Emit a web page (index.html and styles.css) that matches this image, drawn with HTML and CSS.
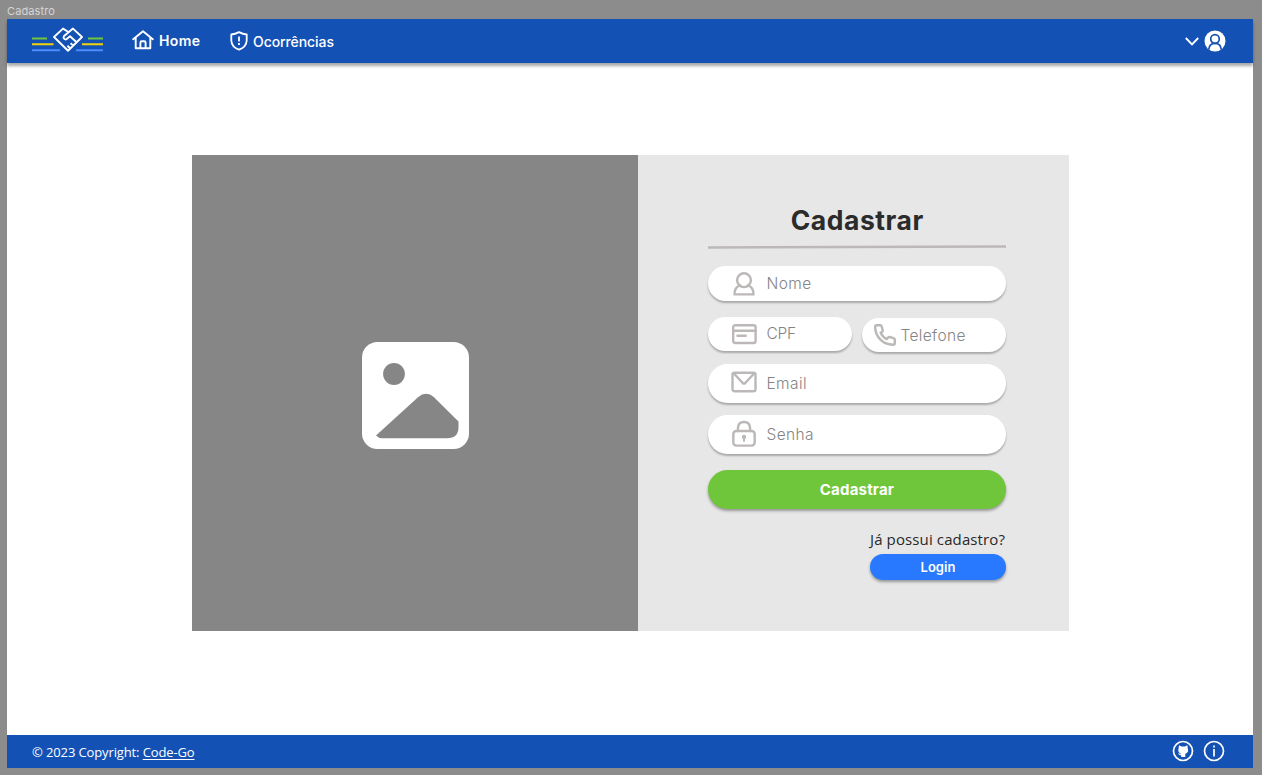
FILE: index.html
```html
<!DOCTYPE html>
<html lang="pt-BR">
<head>
<meta charset="utf-8">
<title>Cadastro</title>
<link rel="stylesheet" href="styles.css">
</head>
<body>
<div class="frame-label">Cadastro</div>
<div class="frame">
  <header class="header">
    <svg class="logo" width="72" height="26" viewBox="0 0 72 26" fill="none">
      <path d="M0 11.5h15M56 11.5h15" stroke="#71c63b" stroke-width="2"/>
      <path d="M0 17.3h21.5M50 17.3h21" stroke="#f2d20c" stroke-width="2"/>
      <path d="M0 23.3h28M44 23.3h27" stroke="#4b8dff" stroke-width="2"/>
      <path d="M36 4.8L31 1.6L22 10L36 23.7L50 10L41 1.6L31.8 9.3C30.8 11.3 33 13.4 35 11.8L38 9.2L44.6 15.2M38.6 16.2l2.4 2.2M35.4 18.8l2.2 2" stroke="#fff" stroke-width="1.9" stroke-linejoin="round"/>
    </svg>
    <a class="nav nav-home">
      <svg width="22" height="20" viewBox="0 0 22 20" fill="none" stroke="#fff" stroke-width="1.9" stroke-linejoin="round" stroke-linecap="round"><path d="M1.2 9.2L11 1.2L20.8 9.2M3.7 7.5V18.2H18.3V7.5M8.4 18v-5.2q0-1.5 1.4-1.5h2.4q1.4 0 1.4 1.5V18"/></svg>
      <span class="t-home">Home</span>
    </a>
    <a class="nav nav-oc">
      <svg width="18" height="20" viewBox="0 0 18 20" fill="none" stroke="#fff" stroke-width="1.8" stroke-linejoin="round"><path d="M9 1.1Q12.8 3.2 16.7 3.5V9.5Q16.4 16 9 18.7Q1.6 16 1.3 9.5V3.5Q5.2 3.2 9 1.1Z"/><path d="M9 5.5v5M9 12v1.9"/></svg>
      <span class="t-oc">Ocorrências</span>
    </a>
    <div class="user">
      <svg width="14" height="9" viewBox="0 0 14 9" fill="none" stroke="#fff" stroke-width="1.9"><path d="M.8 1L7 7.3L13.2 1"/></svg>
      <svg width="22" height="22" viewBox="0 0 22 22"><circle cx="11" cy="11" r="10.5" fill="#fff"/><g fill="none" stroke="#1351b4" stroke-width="1.7"><circle cx="11" cy="9" r="4.3"/><path d="M4.8 19.4Q5.3 13.4 11 13.4Q16.7 13.4 17.2 19.4"/></g></svg>
    </div>
  </header>
  <main class="main">
    <section class="card">
      <div class="picture">
        <svg width="107" height="107" viewBox="0 0 107 107"><rect width="107" height="107" rx="15.5" fill="#fff"/><circle cx="32" cy="32" r="10.9" fill="#868686"/><path d="M14 93.5L56 55.2Q64 48.5 72 55.2L96.5 79.5V85Q96.5 96.3 85 96.3H20.5Q16.5 96.3 14 93.5Z" fill="#868686"/></svg>
      </div>
      <form class="form">
        <h1 class="title"><span>Cadastrar</span></h1>
        <svg class="rule" width="298" height="4" viewBox="0 0 298 4"><path d="M0 2.5L298 1.5" stroke="#bcb8b8" stroke-width="2.4"/></svg>
        <label class="field f-nome">
          <svg width="26" height="26" viewBox="0 0 26 26"><circle cx="13" cy="9.2" r="6.9"/><path d="M9 14.3C5.2 15.5 3.5 19 3.5 23.4H22.5C22.5 19 20.8 15.5 17 14.3"/></svg>
          <span>Nome</span>
        </label>
        <div class="pair">
          <label class="field f-cpf">
            <svg width="26" height="26" viewBox="0 0 26 26"><rect x="2.2" y="4.2" width="22.4" height="17.8" rx="2"/><path d="M2.2 9.8h22.4M6.5 14.8h8.2"/></svg>
            <span>CPF</span>
          </label>
          <label class="field f-tel">
            <svg width="22" height="22" viewBox="0 0 22 22"><path d="M2.5 1.3H6.2Q7.4 1.3 7.7 2.5L8.7 6.4Q8.9 7.3 8.2 7.8L6.7 8.8Q8.4 13 12.8 15.1L14.2 13.4Q14.8 12.8 15.6 13L19.6 14.1Q20.8 14.5 20.8 15.7V19.2Q20.8 20.7 19.2 20.7Q11.2 20.4 6.2 15.3Q1.2 10.2 1.1 2.8Q1.1 1.3 2.5 1.3Z"/></svg>
            <span>Telefone</span>
          </label>
        </div>
        <label class="field f-email">
          <svg width="26" height="26" viewBox="0 0 26 26"><rect x="1.5" y="3.7" width="23" height="18.6" rx="2"/><path d="M3 4.5L11.7 14Q13 15.2 14.3 14L23 4.5"/></svg>
          <span>Email</span>
        </label>
        <label class="field f-senha">
          <svg width="26" height="28" viewBox="0 0 26 28"><rect x="2.3" y="11" width="21.4" height="14.6" rx="3"/><path d="M6.9 11V8.2Q7.2 2 13 2Q18.8 2 19.1 8.2V11"/><circle cx="13" cy="17" r="2.2" class="solid"/><path class="slot" d="M13 17v4"/></svg>
          <span>Senha</span>
        </label>
        <button class="submit" type="button"><span>Cadastrar</span></button>
        <div class="login">
          <p class="question">Já possui cadastro?</p>
          <button class="login-btn" type="button"><span>Login</span></button>
        </div>
      </form>
    </section>
  </main>
  <footer class="footer">
    <p class="copy"><span class="c1">© 2023 Copyright:</span> <a class="c2">Code-Go</a></p>
    <div class="links">
      <svg width="22" height="22" viewBox="0 0 22 22"><circle cx="11" cy="11" r="9.5" fill="none" stroke="#fff" stroke-width="1.7"/><path d="M7.2 5.3L9.4 6.6H13L15.2 5.3Q15.9 7 15.7 8.2C16.9 11.3 15.4 13.2 13.3 13.7V17H9.2V15.2Q7 15.6 5.9 13.2L7.2 13.4L9.2 14.3V13.7C7 13.2 5.6 11.3 6.7 8.2Q6.5 7 7.2 5.3Z" fill="#fff"/></svg>
      <svg width="22" height="22" viewBox="0 0 22 22" fill="none" stroke="#fff" stroke-width="1.7"><circle cx="11" cy="11" r="9.5"/><path d="M11 9v7.4M11 5.6v2"/></svg>
    </div>
  </footer>
</div>
</body>
</html>
```
FILE: styles.css
```css
* { box-sizing: border-box; }
body { margin: 0; width: 1262px; height: 775px; overflow: hidden; background: #8c8c8c; font-family: Inter, sans-serif; }
svg { display: block; flex: none; }
p, h1 { margin: 0; }
.frame-label { height: 19px; padding: 4px 0 0 7px; font-size: 11px; line-height: 14px; color: #d6d6d6; letter-spacing: .1px; }
.frame { width: 1246px; height: 749px; margin-left: 7px; display: flex; flex-direction: column; background: #fff; }
.header { height: 44px; background: #1351b4; box-shadow: 0 3px 3px rgba(0,0,0,.35); display: flex; align-items: flex-start; padding-left: 25px; color: #fff; flex: none; }
.logo { margin-top: 8px; }
.nav { display: flex; align-items: flex-start; font-size: 14px; line-height: 20px; white-space: nowrap; }
.nav-home { margin: 11px 0 0 28px; width: 97.5px; gap: 5px; }
.nav-home span { margin-top: 1px; font-weight: 600; }
.nav-oc { margin-top: 11.5px; gap: 5.5px; }
.nav-oc span { margin-top: 1px; font-weight: 500; }
.t-home { letter-spacing: .4px; }
.t-oc { letter-spacing: -.08px; }
.user { margin: 11px 27.5px 0 auto; display: flex; gap: 5px; align-items: center; }
.main { flex: 1; padding: 92px 0 0 185px; }
.card { width: 876.5px; height: 476px; display: flex; background: #e7e7e7; }
.picture { width: 446.4px; background: #868686; padding: 187px 0 0 169.6px; flex: none; }
.form { width: 298px; margin-left: 69.6px; padding-top: 44px; }
.title { height: 46px; text-align: center; font-size: 26.5px; line-height: 42px; font-weight: 650; color: #2b2b2b; white-space: nowrap; }
.title span { letter-spacing: .55px; margin-right: -.55px; }
.rule { margin-top: 0; }
.field { display: flex; align-items: center; background: #fff; border-radius: 20px; box-shadow: 0 2px 2px rgba(0,0,0,.27); padding-left: 23px; gap: 9.5px; font-size: 15.5px; font-weight: 300; color: #858585; white-space: nowrap; letter-spacing: .4px; }
.field svg { fill: none; stroke: #bdb8b8; stroke-width: 2.4; stroke-linecap: round; stroke-linejoin: round; }
.field .solid { fill: #bdb8b8; stroke: none; }
.field .slot { stroke-width: 2; }
.f-nome { margin-top: 17px; height: 34.5px; }
.f-nome svg { margin-top: 1px; }
.pair { display: flex; justify-content: space-between; margin-top: 16px; height: 47.5px; }
.f-cpf { width: 144px; height: 34px; letter-spacing: -.3px; }
.f-tel { width: 144px; height: 34px; margin-top: 1.5px; padding-left: 12px; gap: 4.5px; letter-spacing: .35px; }
.f-email { height: 38.5px; }
.f-email svg { margin-top: -3px; }
.f-senha { height: 38.5px; margin-top: 12.5px; }
.submit { display: block; width: 298px; height: 38.5px; margin-top: 16.5px; border: 0; padding: 0; border-radius: 20px; background: #70c63b; color: #fff; font: 700 15px Inter, sans-serif; letter-spacing: .2px; box-shadow: 0 2px 3px rgba(0,0,0,.35); }
.login { width: 136px; margin: 20.5px 0 0 auto; }
.question { font: 400 15px/20px "Open Sans", sans-serif; color: #292929; white-space: nowrap; letter-spacing: .12px; }
.login-btn { display: block; margin-top: 4.5px; width: 136px; height: 26.5px; padding: 0; border: 0; border-radius: 14px; background: #2879ff; color: #fff; font: 600 13px Inter, sans-serif; box-shadow: 0 2px 3px rgba(0,0,0,.35); }
.footer { height: 33px; flex: none; background: #1351b4; color: #fff; display: flex; align-items: center; justify-content: space-between; padding: 0 28px 0 25px; }
.copy { font: 400 13px/18px "Open Sans", sans-serif; white-space: nowrap; letter-spacing: -.12px; }
.c2 { text-decoration: underline; text-underline-offset: 2px; text-decoration-thickness: 1px; }
.links { display: flex; gap: 9px; margin-top: -1px; }
```
